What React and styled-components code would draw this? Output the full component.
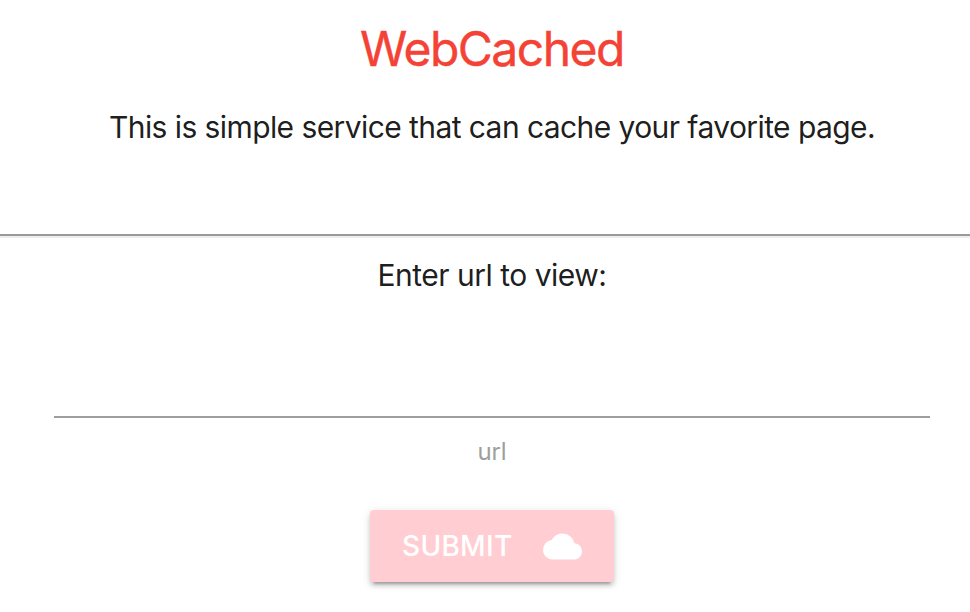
import React from 'react';
import styled, { createGlobalStyle } from 'styled-components';

const GlobalStyle = createGlobalStyle`
  * { box-sizing: border-box; }
  body { margin: 0; background: #fff; color: rgba(0,0,0,.9); font-family: Inter, Roboto, sans-serif; overflow: hidden; }
`;
const Page = styled.main`
  display: flex; flex-direction: column; align-items: center;
  width: 970px; height: 612px;
`;
const Header = styled.header`
  width: 100%; height: 234px; padding: 20px 0 0 14px;
  display: flex; flex-direction: column; align-items: center;
`;
const Title = styled.h1`
  margin: 0; font-size: 48px; line-height: 58px; font-weight: 400;
  color: #f44336; letter-spacing: -1.5px; white-space: nowrap;
  -webkit-text-stroke: 0.4px currentColor;
`;
const Text = styled.p`
  margin: ${p => p.$top}px 0 0; font-size: 30px; line-height: 40px; font-weight: 400;
  letter-spacing: ${p => p.$tracking}px; white-space: nowrap;
`;
const Divider = styled.hr`
  width: 100%; height: 4px; margin: 0; border: 0;
  border-top: 2px solid #9a9a9a; border-bottom: 2px solid #eee;
`;
const Form = styled.form`
  width: 100%; padding: 0 40px 0 54px;
  display: flex; flex-direction: column; align-items: center;
`;
const UrlInput = styled.input`
  width: 100%; height: 90px; margin-top: 33px; padding: 0; border: 0;
  border-bottom: 2px solid #9e9e9e; background: transparent; outline: 0; font: 30px Inter, sans-serif;
`;
const Hint = styled.label`
  margin-top: 18px; font-size: 24px; line-height: 32px; color: #9e9e9e; letter-spacing: -0.2px;
`;
const SubmitButton = styled.button`
  width: 244px; height: 72px; margin-top: 42px; padding: 0 32px; border: 0; border-radius: 4px;
  display: flex; align-items: center; justify-content: space-between;
  background: #ffcdd2; color: #fff; font: 500 28px Inter, sans-serif; letter-spacing: 0.3px;
  box-shadow: 0 4px 4px rgba(0,0,0,.14), 0 2px 10px rgba(0,0,0,.12), 0 6px 2px -4px rgba(0,0,0,.2);
`;
const CloudIcon = styled.svg`
  width: 39px; height: 39px; fill: currentColor;
`;

export default function App() {
  return (
    <Page>
      <GlobalStyle />
      <Header>
        <Title>WebCached</Title>
        <Text $top={29} $tracking={-0.58}>This is simple service that can cache your favorite page.</Text>
      </Header>
      <Divider />
      <Form onSubmit={e => e.preventDefault()}>
        <Text $top={17} $tracking={-0.5}>Enter url to view:</Text>
        <UrlInput id="url" type="text" />
        <Hint htmlFor="url">url</Hint>
        <SubmitButton type="submit">
          SUBMIT
          <CloudIcon viewBox="0 0 24 24">
            <path d="M19.35 10.04A7.49 7.49 0 0 0 12 4C9.11 4 6.6 5.64 5.35 8.04A5.994 5.994 0 0 0 0 14c0 3.31 2.69 6 6 6h13c2.76 0 5-2.24 5-5 0-2.64-2.05-4.78-4.65-4.96z" />
          </CloudIcon>
        </SubmitButton>
      </Form>
    </Page>
  );
}
